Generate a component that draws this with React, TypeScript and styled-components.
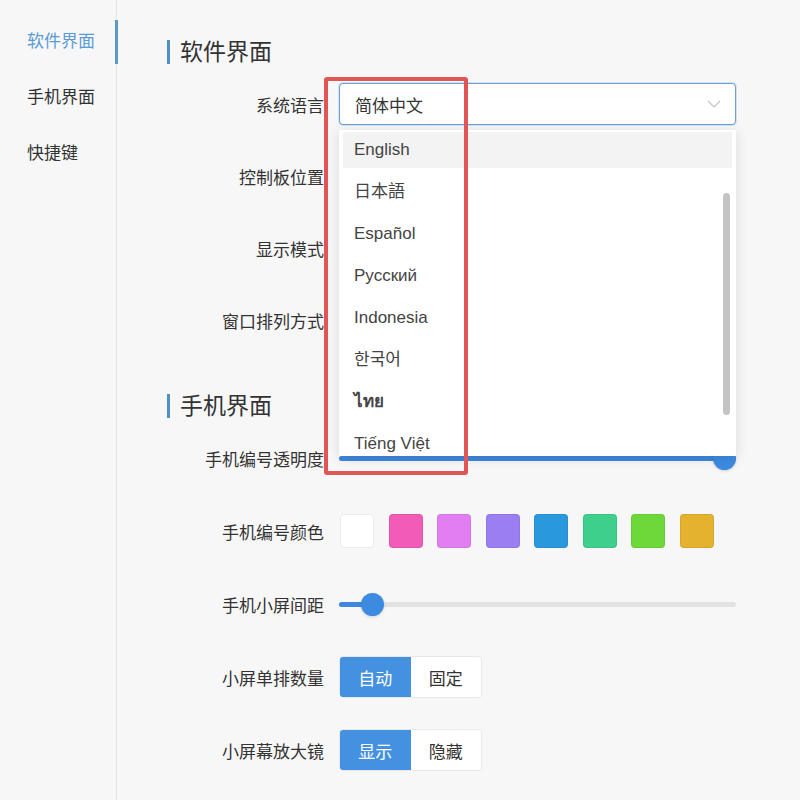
import styled, { createGlobalStyle } from "styled-components"

const GlobalStyle = createGlobalStyle`
  body {
    margin: 0;
    background: #f7f7f7;
    font-family: "Liberation Sans", "Noto Sans CJK SC", sans-serif;
    color: #333;
  }
`

const Page = styled.div`
  display: flex;
  min-height: 800px;
  position: relative;
  overflow: hidden;
`

const Sidebar = styled.nav`
  width: 116px;
  flex-shrink: 0;
  border-right: 1px solid #e3e3e3;
  padding-top: 20px;
  display: flex;
  flex-direction: column;
  gap: 12px;
`

const NavItem = styled.div<{ $active?: boolean }>`
  height: 44px;
  line-height: 44px;
  margin-right: -2px;
  padding-left: 27px;
  font-size: 17px;
  color: ${({ $active }) => ($active ? "#5b9bd5" : "#333")};
  border-right: 3px solid ${({ $active }) => ($active ? "#5b9bc4" : "transparent")};
`

const Main = styled.main`
  flex: 1;
  padding: 40px 0 0 50px;
  display: flex;
  flex-direction: column;
`

const SectionTitle = styled.h2`
  margin: 0 0 19px;
  height: 24px;
  line-height: 24px;
  padding-left: 10px;
  border-left: 3px solid #4d90c3;
  font-size: 23px;
  font-weight: 400;
  color: #333;
`

const Section = styled.section<{ $gap: number }>`
  display: flex;
  flex-direction: column;
  gap: ${({ $gap }) => $gap}px;
  margin-bottom: 53px;
`

const Row = styled.div`
  display: grid;
  grid-template-columns: 157px 397px;
  column-gap: 15px;
  align-items: center;
  height: 42px;
`

const Label = styled.label`
  text-align: right;
  font-size: 17px;
  color: #333;
  white-space: nowrap;
`

const SelectWrap = styled.div<{ $open?: boolean }>`
  position: relative;
  z-index: ${({ $open }) => ($open ? 5 : 1)};
`

const SelectBox = styled.div<{ $focused?: boolean }>`
  height: 42px;
  box-sizing: border-box;
  border: 1px solid ${({ $focused }) => ($focused ? "#6a9fd8" : "#dcdfe6")};
  box-shadow: ${({ $focused }) => ($focused ? "0 0 0 1px rgba(106, 159, 216, 0.25)" : "none")};
  border-radius: 4px;
  background: #fff;
  display: flex;
  align-items: center;
  justify-content: space-between;
  padding: 0 14px 0 15px;
  font-size: 17px;
  color: #333;
`

const Dropdown = styled.div`
  position: absolute;
  top: 47px;
  left: 0;
  right: 0;
  height: 326px;
  background: #fff;
  box-shadow: 0 2px 12px rgba(0, 0, 0, 0.12);
  overflow: hidden;
  padding: 2px 4px 0;
  box-sizing: border-box;
`

const Option = styled.div<{ $hover?: boolean; $bold?: boolean }>`
  height: 36px;
  line-height: 36px;
  margin-bottom: 6px;
  padding-left: 11px;
  font-size: 17px;
  font-weight: ${({ $bold }) => ($bold ? 700 : 400)};
  color: #444;
  background: ${({ $hover }) => ($hover ? "#f3f3f3" : "transparent")};
`

const ScrollThumb = styled.div`
  position: absolute;
  right: 6px;
  top: 63px;
  width: 7px;
  height: 222px;
  border-radius: 4px;
  background: #c4c4c4;
`

const Annotation = styled.div`
  position: absolute;
  top: -6px;
  left: -15px;
  width: 144px;
  height: 398px;
  box-sizing: border-box;
  border: 4px solid #e25555;
  border-radius: 3px;
  pointer-events: none;
`

const SliderTrack = styled.div`
  position: relative;
  height: 5px;
  border-radius: 3px;
  background: #e2e2e2;
`

const SliderFill = styled.div`
  position: absolute;
  left: 0;
  top: 0;
  bottom: 0;
  border-radius: 3px;
  background: #3d88dc;
`

const SliderThumb = styled.div`
  position: absolute;
  top: 50%;
  width: 23px;
  height: 23px;
  margin: -11.5px 0 0 -11.5px;
  border-radius: 50%;
  background: #3d8be0;
  box-shadow: 0 1px 3px rgba(0, 0, 0, 0.15);
`

const Swatches = styled.div`
  display: flex;
  gap: 14.5px;
  padding-left: 1px;
`

const Swatch = styled.div<{ $color: string }>`
  width: 34px;
  height: 34px;
  box-sizing: border-box;
  border-radius: 4px;
  background: ${({ $color }) => $color};
  border: 1px solid ${({ $color }) => ($color === "#ffffff" ? "#ececec" : "rgba(0,0,0,0.06)")};
`

const ButtonGroup = styled.div`
  display: flex;
  width: 143px;
  height: 42px;
  border-radius: 4px;
  overflow: hidden;
  border: 1px solid #e8e8e8;
  box-sizing: border-box;
`

const ToggleButton = styled.button<{ $active?: boolean }>`
  flex: 1;
  border: none;
  margin: 0;
  font-family: inherit;
  font-size: 17px;
  background: ${({ $active }) => ($active ? "#4591e1" : "#fff")};
  color: ${({ $active }) => ($active ? "#fff" : "#333")};
`

const Chevron = () => (
  <svg width="14" height="8" viewBox="0 0 14 8">
    <polyline points="1,1 7,7 13,1" fill="none" stroke="#c0c4cc" strokeWidth="1.2" />
  </svg>
)

const Slider = ({ value }: { value: number }) => (
  <SliderTrack>
    <SliderFill style={{ width: `${value}%` }} />
    <SliderThumb style={{ left: `calc(11.5px + (100% - 23px) * ${value / 100})` }} />
  </SliderTrack>
)

const languages = ["English", "日本語", "Español", "Русский", "Indonesia", "한국어", "ไทย", "Tiếng Việt"]
const colors = ["#ffffff", "#f05cb8", "#e07ef2", "#9b7ef2", "#2a98dc", "#3ecf8c", "#6cd83a", "#e4b22e"]

const App = () => {
  return (
    <>
      <GlobalStyle />
      <Page>
        <Sidebar>
          <NavItem $active>软件界面</NavItem>
          <NavItem>手机界面</NavItem>
          <NavItem>快捷键</NavItem>
        </Sidebar>
        <Main>
          <SectionTitle>软件界面</SectionTitle>
          <Section $gap={30}>
            <Row>
              <Label>系统语言</Label>
              <SelectWrap $open>
                <SelectBox $focused>
                  简体中文
                  <Chevron />
                </SelectBox>
                <Dropdown>
                  {languages.map((lang, i) => (
                    <Option key={lang} $hover={i === 0} $bold={lang === "ไทย"}>{lang}</Option>
                  ))}
                  <ScrollThumb />
                </Dropdown>
                <Annotation />
              </SelectWrap>
            </Row>
            <Row>
              <Label>控制板位置</Label>
              <SelectWrap>
                <SelectBox><span /><Chevron /></SelectBox>
              </SelectWrap>
            </Row>
            <Row>
              <Label>显示模式</Label>
              <SelectWrap>
                <SelectBox><span /><Chevron /></SelectBox>
              </SelectWrap>
            </Row>
            <Row>
              <Label>窗口排列方式</Label>
              <SelectWrap>
                <SelectBox><span /><Chevron /></SelectBox>
              </SelectWrap>
            </Row>
          </Section>

          <SectionTitle>手机界面</SectionTitle>
          <Section $gap={31}>
            <Row>
              <Label>手机编号透明度</Label>
              <Slider value={100} />
            </Row>
            <Row>
              <Label>手机编号颜色</Label>
              <Swatches>
                {colors.map(c => (
                  <Swatch key={c} $color={c} />
                ))}
              </Swatches>
            </Row>
            <Row>
              <Label>手机小屏间距</Label>
              <Slider value={6} />
            </Row>
            <Row>
              <Label>小屏单排数量</Label>
              <ButtonGroup>
                <ToggleButton $active>自动</ToggleButton>
                <ToggleButton>固定</ToggleButton>
              </ButtonGroup>
            </Row>
            <Row>
              <Label>小屏幕放大镜</Label>
              <ButtonGroup>
                <ToggleButton $active>显示</ToggleButton>
                <ToggleButton>隐藏</ToggleButton>
              </ButtonGroup>
            </Row>
          </Section>
        </Main>
      </Page>
    </>
  )
}

export default App
